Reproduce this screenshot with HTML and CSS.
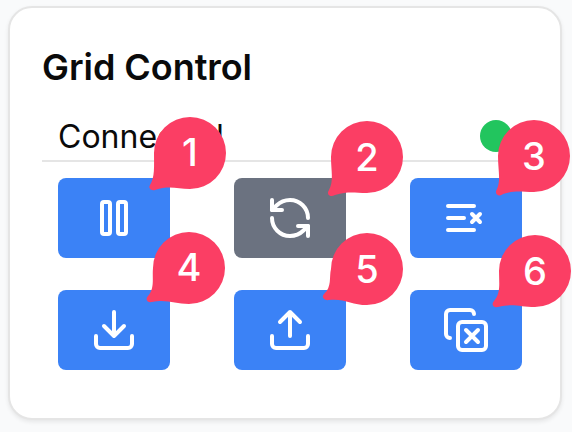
FILE: index.html
```html
<!DOCTYPE html>
<html lang="en">
<head>
<meta charset="utf-8">
<title>Grid Control</title>
<link rel="stylesheet" href="styles.css">
</head>
<body>
<main class="card">
  <h1 class="title">Grid Control</h1>
  <div class="status"><span class="status-text">Connected</span><span class="dot"></span></div>
  <div class="grid">
    <button class="btn" aria-label="Pause"><svg class="icon" viewBox="0 0 24 24"><rect x="6" y="4" width="4" height="16" rx="1"/><rect x="14" y="4" width="4" height="16" rx="1"/></svg></button>
    <button class="btn btn-muted" aria-label="Refresh"><svg class="icon" viewBox="0 0 24 24"><path d="M21 12a9 9 0 0 0-9-9 9.75 9.75 0 0 0-6.74 2.74L3 8"/><path d="M3 3v5h5"/><path d="M3 12a9 9 0 0 0 9 9 9.75 9.75 0 0 0 6.74-2.74L21 16"/><path d="M16 16h5v5"/></svg></button>
    <button class="btn" aria-label="Clear list"><svg class="icon" viewBox="0 0 24 24"><path d="M11 12H3M16 6H3M16 18H3M19 10l-4 4M15 10l4 4"/></svg></button>
    <button class="btn" aria-label="Download"><svg class="icon" viewBox="0 0 24 24"><path d="M21 15v4a2 2 0 0 1-2 2H5a2 2 0 0 1-2-2v-4"/><path d="M7 10l5 5 5-5M12 15V3"/></svg></button>
    <button class="btn" aria-label="Upload"><svg class="icon" viewBox="0 0 24 24"><path d="M21 15v4a2 2 0 0 1-2 2H5a2 2 0 0 1-2-2v-4"/><path d="M17 8l-5-5-5 5M12 3v12"/></svg></button>
    <button class="btn" aria-label="Remove copies"><svg class="icon" viewBox="0 0 24 24"><path d="M12 12l6 6M12 18l6-6"/><rect x="8" y="8" width="14" height="14" rx="2"/><path d="M4 16c-1.1 0-2-.9-2-2V4c0-1.1.9-2 2-2h10c1.1 0 2 .9 2 2"/></svg></button>
  </div>
</main>
<svg class="markers" viewBox="0 0 572 432">
  <g transform="translate(190 153)"><path d="M0-36A36 36 0 1 1 0 36C-13 36-20 32-35 37C-39 38-42 35-40 32C-35 24-36 14-36 0A36 36 0 0 1 0-36Z"/><text x="0" y="13">1</text></g>
  <g transform="translate(367 157)"><path d="M0-36A36 36 0 1 1 0 36C-13 36-18 34-32 38C-37 41-41 37-38 33C-33 24-36 14-36 0A36 36 0 0 1 0-36Z"/><text x="0" y="13.5">2</text></g>
  <g transform="translate(534 156)"><path d="M0-36A36 36 0 1 1 0 36C-13 36-18 34-31 38C-36 42-40 37-37 33C-33 24-36 14-36 0A36 36 0 0 1 0-36Z"/><text x="0" y="13.5">3</text></g>
  <g transform="translate(189 268)"><path d="M0-36A36 36 0 1 1 0 36C-14 36-22 31-37 34C-42 35-44 31-41 28C-34 20-37 10-36 0A36 36 0 0 1 0-36Z"/><text x="0" y="13">4</text></g>
  <g transform="translate(367 269)"><path d="M0-36A36 36 0 1 1 0 36C-15 36-23 29-38 31C-43 32-46 28-43 25C-35 18-38 8-36 0A36 36 0 0 1 0-36Z"/><text x="0" y="13.5">5</text></g>
  <g transform="translate(535 271)"><path d="M0-36A36 36 0 1 1 0 36C-15 36-22 32-37 36C-42 37-44 33-41 30C-34 22-36 12-36 0A36 36 0 0 1 0-36Z"/><text x="0" y="13.5">6</text></g>
</svg>
</body>
</html>
```
FILE: styles.css
```css
* { box-sizing: border-box; }
body {
  margin: 0;
  padding: 6px 10px 12px 8px;
  width: 572px;
  height: 432px;
  overflow: hidden;
  background: #f9fafb;
  color: #0a0a0a;
  font-family: Inter, sans-serif;
}
.card {
  height: 414px;
  padding: 32px;
  border: 2px solid #e5e5e5;
  border-radius: 24px;
  background: #fff;
  box-shadow: 0 2px 4px rgba(0, 0, 0, 0.08);
}
.title {
  margin: 0;
  height: 56px;
  font-size: 36px;
  line-height: 54px;
  font-weight: 600;
  letter-spacing: -0.05px;
}
.status {
  display: flex;
  justify-content: space-between;
  align-items: center;
  height: 66px;
  padding: 16px 16px 0;
  border-bottom: 2px solid #e5e5e5;
}
.status-text {
  padding-top: 2px;
  font-size: 32px;
  line-height: 46px;
}
.dot {
  width: 32px;
  height: 32px;
  border-radius: 50%;
  background: #22c55e;
}
.grid {
  display: grid;
  grid-template-columns: repeat(3, 112px);
  grid-auto-rows: 80px;
  gap: 32px 64px;
  padding: 16px 16px 0;
}
.btn {
  display: flex;
  align-items: center;
  justify-content: center;
  padding: 0;
  border: 0;
  border-radius: 8px;
  background: #3b82f6;
}
.btn-muted { background: #6b7280; }
.icon {
  width: 48px;
  height: 48px;
  fill: none;
  stroke: #fff;
  stroke-width: 2;
  stroke-linecap: round;
  stroke-linejoin: round;
}
.markers {
  position: absolute;
  left: 0;
  top: 0;
  width: 572px;
  height: 432px;
  fill: #fb3e64;
  pointer-events: none;
}
.markers text {
  fill: #fff;
  font-size: 38px;
  font-weight: 500;
  text-anchor: middle;
}
```
